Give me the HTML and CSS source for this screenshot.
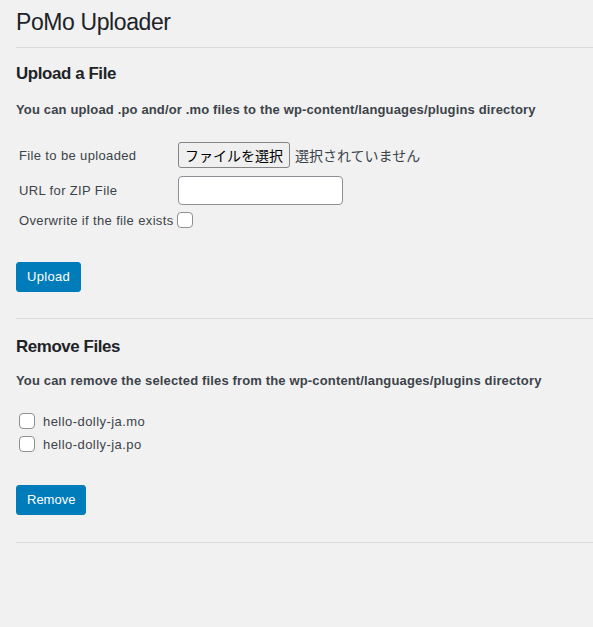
FILE: index.html
```html
<!DOCTYPE html>
<html lang="ja">
<head>
<meta charset="utf-8">
<title>PoMo Uploader</title>
<link rel="stylesheet" href="styles.css">
</head>
<body>
<div class="wrap">
  <h1 class="title">PoMo Uploader</h1>
  <hr class="sep sep-top">

  <section class="upload">
    <h2 class="heading heading-upload">Upload a File</h2>
    <p class="desc desc-upload">You can upload .po and/or .mo files to the wp-content/languages/plugins directory</p>
    <div class="form">
      <div class="row row-file">
        <span class="label">File to be uploaded</span>
        <span class="field">
          <button type="button" class="file-btn">ファイルを選択</button>
          <span class="file-status">選択されていません</span>
        </span>
      </div>
      <div class="row row-url">
        <span class="label">URL for ZIP File</span>
        <span class="field"><input type="text" class="text-input"></span>
      </div>
      <div class="row row-over">
        <span class="label">Overwrite if the file exists</span>
        <span class="field field-check"><input type="checkbox" class="check"></span>
      </div>
    </div>
    <button type="button" class="primary primary-upload">Upload</button>
  </section>

  <hr class="sep sep-mid">

  <section class="remove">
    <h2 class="heading heading-remove">Remove Files</h2>
    <p class="desc desc-remove">You can remove the selected files from the wp-content/languages/plugins directory</p>
    <div class="files">
      <label class="file-row"><input type="checkbox" class="check"><span class="file-name">hello-dolly-ja.mo</span></label>
      <label class="file-row file-row-2"><input type="checkbox" class="check"><span class="file-name">hello-dolly-ja.po</span></label>
    </div>
    <button type="button" class="primary primary-remove">Remove</button>
  </section>

  <hr class="sep sep-bottom">
</div>
</body>
</html>
```

FILE: styles.css
```css
html, body {
  margin: 0;
  padding: 0;
  background: #f1f1f1;
}

body {
  font-family: "Liberation Sans", Arial, "Noto Sans CJK JP", sans-serif;
  font-size: 13px;
  color: #3c434a;
  height: 627px;
  overflow: hidden;
}

.wrap {
  padding-left: 16px;
}

.title {
  margin: 0;
  padding-top: 7px;
  font-size: 23px;
  line-height: 30px;
  font-weight: 400;
  letter-spacing: -0.4px;
  color: #1d2327;
}

.sep {
  border: 0;
  border-top: 1px solid #dcdcde;
  height: 0;
  margin: 0;
}

.sep-top { margin-top: 10px; }
.sep-mid { margin-top: 26px; }
.sep-bottom { margin-top: 27px; }

.heading {
  margin: 0;
  font-size: 16.9px;
  line-height: 24px;
  font-weight: 700;
  letter-spacing: -0.4px;
  color: #1d2327;
}

.heading-upload { margin-top: 14px; }
.heading-remove { margin-top: 16px; }

.desc {
  margin: 0;
  font-size: 13px;
  line-height: 20px;
  font-weight: 700;
  letter-spacing: 0.15px;
  color: #3c434a;
}

.desc-upload { margin-top: 14px; }
.desc-remove { margin-top: 12px; }

.form {
  margin-top: 22px;
  padding-left: 3px;
  display: flex;
  flex-direction: column;
}

.row {
  display: flex;
  align-items: center;
}

.row-file { height: 26px; }
.row-url { height: 29px; margin-top: 8px; }
.row-over { height: 16px; margin-top: 7px; }

.label {
  width: 158px;
  flex: 0 0 158px;
  white-space: nowrap;
  letter-spacing: 0.36px;
  color: #3c434a;
}

.field {
  display: flex;
  align-items: center;
  margin-left: 1px;
}

.field-check {
  margin-left: 0;
}

.file-btn {
  box-sizing: border-box;
  width: 112px;
  height: 26px;
  margin: 0;
  padding: 0;
  border: 1px solid #858585;
  border-radius: 3px;
  background: #efefef;
  color: #000;
  font-family: "Noto Sans CJK JP", sans-serif;
  font-size: 14px;
  line-height: 24px;
}

.file-status {
  margin-left: 5px;
  font-family: "Noto Sans CJK JP", sans-serif;
  font-size: 14px;
  color: #3c434a;
}

.text-input {
  box-sizing: border-box;
  width: 165px;
  height: 29px;
  margin: 0;
  padding: 0 8px;
  border: 1px solid #8c8f94;
  border-radius: 4px;
  background: #fff;
  font-family: inherit;
  font-size: 14px;
}

.check {
  -webkit-appearance: none;
  appearance: none;
  box-sizing: border-box;
  width: 16px;
  height: 16px;
  margin: 0;
  border: 1px solid #8c8f94;
  border-radius: 4px;
  background: #fff;
  flex: 0 0 16px;
}

.primary {
  display: block;
  box-sizing: border-box;
  height: 30px;
  padding: 0 10px;
  border: 1px solid #007cba;
  border-radius: 3px;
  background: #007cba;
  color: #fff;
  font-family: inherit;
  font-size: 13px;
  line-height: 28px;
  letter-spacing: 0.3px;
}

.primary-upload { margin-top: 34px; }
.primary-remove { margin-top: 33px; letter-spacing: 0; }

.files {
  margin-top: 22px;
  padding-left: 3px;
  display: flex;
  flex-direction: column;
}

.file-row {
  display: flex;
  align-items: center;
  height: 16px;
}

.file-row-2 { margin-top: 7px; }

.file-name {
  margin-left: 8px;
  letter-spacing: 0.45px;
  color: #3c434a;
}
```
